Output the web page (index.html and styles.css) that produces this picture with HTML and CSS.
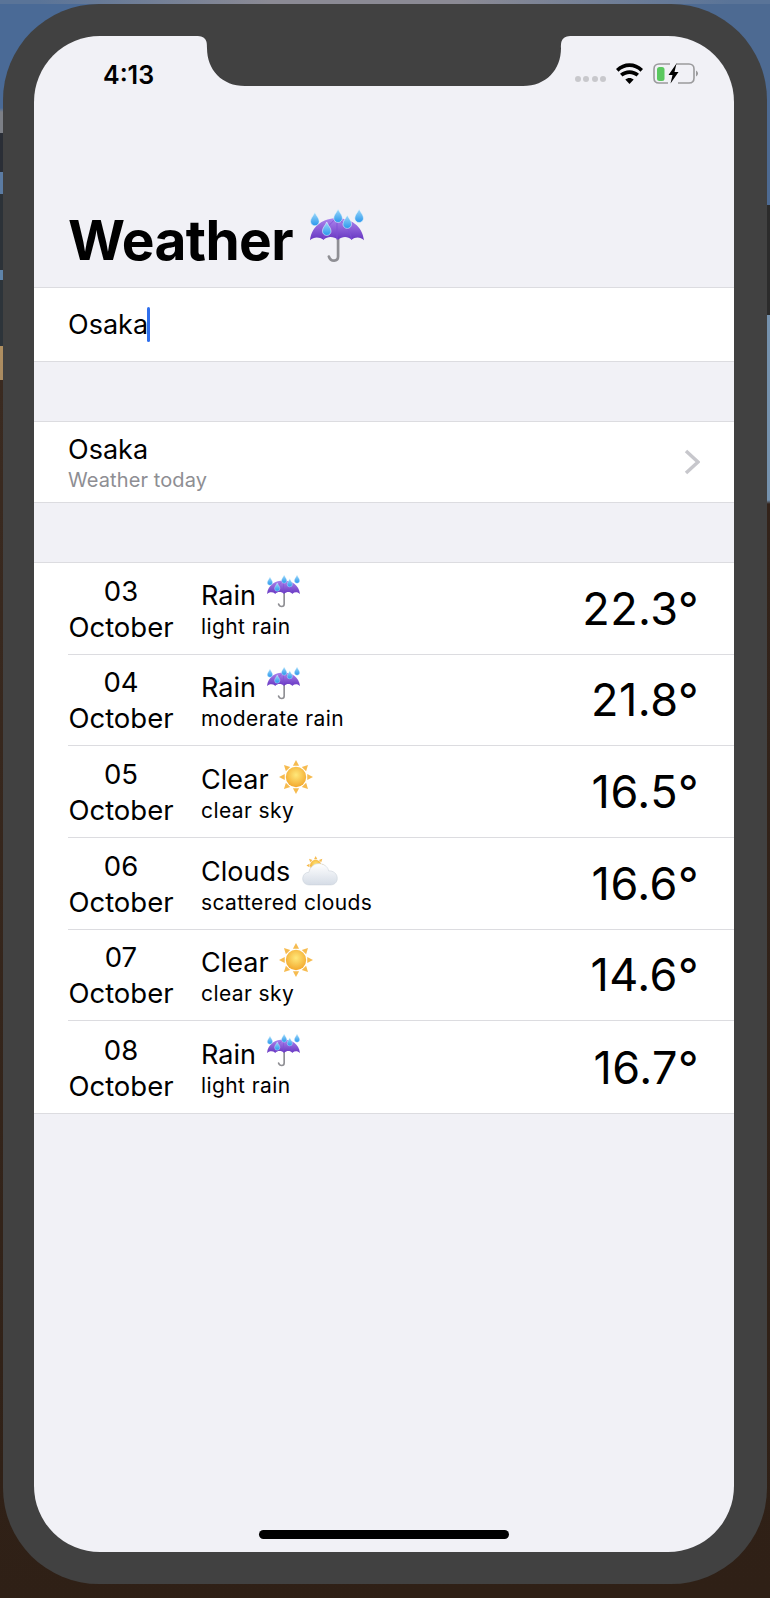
FILE: index.html
```html
<!DOCTYPE html>
<html lang="en">
  <head>
    <meta charset="UTF-8" />
    <title>Weather</title>
    <link rel="stylesheet" href="styles.css">
  </head>
  <body>
    <svg class="defs" aria-hidden="true">
      <defs>
        <linearGradient id="canopy" x1="0" y1="0" x2="0" y2="1">
          <stop offset="0" stop-color="#ad85ee" />
          <stop offset="1" stop-color="#6534c0" />
        </linearGradient>
        <linearGradient id="water" x1="0" y1="0" x2="0" y2="1">
          <stop offset="0" stop-color="#9fdafa" />
          <stop offset="1" stop-color="#2a97ec" />
        </linearGradient>
        <radialGradient id="sunball" cx="0.5" cy="0.4" r="0.6">
          <stop offset="0" stop-color="#ffe87a" />
          <stop offset="1" stop-color="#f3a92e" />
        </radialGradient>
        <linearGradient id="puff" x1="0" y1="0" x2="0" y2="1">
          <stop offset="0" stop-color="#ffffff" />
          <stop offset="1" stop-color="#d5dce6" />
        </linearGradient>
        <path id="drop" d="M0 -14C3 -7 8 -3 8 3A8 8 0 0 1 -8 3C-8 -3 -3 -7 0 -14Z" fill="url(#water)" stroke="#eef8fe" stroke-width="1" />
        <path id="ray" d="M50 0L41 17H59Z" fill="#f6bb4f" />
        <symbol id="rain" viewBox="0 0 100 100">
          <path d="M52 55V88C52 98 38 98 35 88" fill="none" stroke="#8f8f94" stroke-width="5" stroke-linecap="round" />
          <path d="M0 58C3 30 26 17 50 17C74 17 97 30 100 58C93 51 84 51 77 57C70 50 60 50 52 57C44 50 32 50 25 57C17 51 7 51 0 58Z" fill="url(#canopy)" />
          <path d="M50 17C36 26 27 40 25 57M50 17C64 26 75 40 77 57M50 17V57" fill="none" stroke="#7f50d6" stroke-width="1.500" />
          <use href="#drop" x="9" y="20" />
          <use href="#drop" x="31" y="38" />
          <use href="#drop" x="52" y="14" />
          <use href="#drop" x="69" y="25" />
          <use href="#drop" x="91" y="14" />
        </symbol>
        <symbol id="sun" viewBox="0 0 100 100">
          <use href="#ray" />
          <use href="#ray" transform="rotate(45 50 50)" />
          <use href="#ray" transform="rotate(90 50 50)" />
          <use href="#ray" transform="rotate(135 50 50)" />
          <use href="#ray" transform="rotate(180 50 50)" />
          <use href="#ray" transform="rotate(225 50 50)" />
          <use href="#ray" transform="rotate(270 50 50)" />
          <use href="#ray" transform="rotate(315 50 50)" />
          <circle cx="50" cy="50" r="30" fill="url(#sunball)" />
        </symbol>
        <symbol id="clouds" viewBox="0 0 100 100">
          <g transform="translate(12 17) scale(0.52)">
            <use href="#sun" width="100" height="100" />
          </g>
          <path d="M20 97C8 97 1 88 2 78C3 68 10 62 19 62C22 46 36 36 51 38C65 40 73 50 74 58C87 57 98 66 98 79C98 90 89 97 80 97Z" fill="url(#puff)" stroke="#c9d0da" stroke-width="1.500" />
        </symbol>
      </defs>
    </svg>

    <div class="phone">
      <main class="screen">
        <svg class="notch" viewBox="0 0 376 50" aria-hidden="true">
          <path d="M0 0H376C365 0 365 6 365 12C365 34 350 50 327 50H49C26 50 11 34 11 12C11 6 11 0 0 0Z" />
        </svg>

        <div class="status-bar">
          <span class="clock">4:13</span>
          <div class="status-icons">
            <div class="signal"><i></i><i></i><i></i><i></i></div>
            <svg class="wifi" viewBox="0 0 27 21">
              <path d="M13.500 21L9.300 16.500C11.600 14.400 15.400 14.400 17.700 16.500Z" />
              <path d="M6.500 13.500L4 10.800C9.300 6 17.700 6 23 10.800L20.500 13.500C16.500 10 10.500 10 6.500 13.500Z" />
              <path d="M2.500 8.700L0 6C7.500 -1.800 19.500 -1.800 27 6L24.500 8.700C18.300 2.500 8.700 2.500 2.500 8.700Z" />
            </svg>
            <svg class="battery" viewBox="0 0 45 21">
              <path d="M17 1H6C3 1 1 3 1 6V15C1 18 3 20 6 20H15M25 20H36C39 20 41 18 41 15V6C41 3 39 1 36 1H23" fill="none" stroke="#9a9a9c" stroke-width="1.600" />
              <path d="M43 7.500C44.500 8.500 45 9.500 45 10.500C45 11.500 44.500 12.500 43 13.500Z" fill="#9a9a9c" />
              <rect x="4" y="4" width="7.500" height="14" rx="2.500" fill="#5ac85f" />
              <path d="M23.500 0.500L15.500 12H19.500L17.500 20.500L25.500 9H21.500Z" fill="#000" />
            </svg>
          </div>
        </div>

        <header class="page-head">
          <h1 class="page-title">Weather <svg class="emoji emoji-title"><use href="#rain" /></svg></h1>
        </header>

        <section class="group search-row">
          <span class="search-text">Osaka</span><span class="caret"></span>
        </section>

        <section class="group city-row">
          <div class="city-text">
            <div class="city-name">Osaka</div>
            <div class="city-sub">Weather today</div>
          </div>
          <svg class="chevron" viewBox="0 0 16 26"><path d="M2 2L14 13L2 24" /></svg>
        </section>

        <section class="group forecast">
          <div class="day">
            <div class="date">03<br />October</div>
            <div class="cond">
              <div class="cond-main">Rain <svg class="emoji"><use href="#rain" /></svg></div>
              <div class="cond-sub">light rain</div>
            </div>
            <div class="temp">22.3°</div>
          </div>
          <div class="day">
            <div class="date">04<br />October</div>
            <div class="cond">
              <div class="cond-main">Rain <svg class="emoji"><use href="#rain" /></svg></div>
              <div class="cond-sub">moderate rain</div>
            </div>
            <div class="temp">21.8°</div>
          </div>
          <div class="day">
            <div class="date">05<br />October</div>
            <div class="cond">
              <div class="cond-main">Clear <svg class="emoji emoji-sun"><use href="#sun" /></svg></div>
              <div class="cond-sub">clear sky</div>
            </div>
            <div class="temp">16.5°</div>
          </div>
          <div class="day">
            <div class="date">06<br />October</div>
            <div class="cond">
              <div class="cond-main">Clouds <svg class="emoji emoji-cloud"><use href="#clouds" /></svg></div>
              <div class="cond-sub">scattered clouds</div>
            </div>
            <div class="temp">16.6°</div>
          </div>
          <div class="day">
            <div class="date">07<br />October</div>
            <div class="cond">
              <div class="cond-main">Clear <svg class="emoji emoji-sun"><use href="#sun" /></svg></div>
              <div class="cond-sub">clear sky</div>
            </div>
            <div class="temp">14.6°</div>
          </div>
          <div class="day">
            <div class="date">08<br />October</div>
            <div class="cond">
              <div class="cond-main">Rain <svg class="emoji"><use href="#rain" /></svg></div>
              <div class="cond-sub">light rain</div>
            </div>
            <div class="temp">16.7°</div>
          </div>
        </section>

        <div class="home-bar"></div>
      </main>
    </div>
  </body>
</html>
```
FILE: styles.css
```css
html,
body {
  height: 100%;
}
body {
  margin: 0;
  padding: 4px 0 0 3px;
  box-sizing: border-box;
  overflow: hidden;
  font-family: "Inter", "Liberation Sans", sans-serif;
  color: #000;
  background:
    linear-gradient(90deg, #5a7498 5%, #8b8a94 35%, #8b8a94 60%, #5a7498 95%) left top / 100% 4px no-repeat,
    linear-gradient(
        #4a6a96 0,
        #4a6a96 108px,
        #7c7f86 112px,
        #7c7f86 133px,
        #2a2e36 133px,
        #2a2e36 172px,
        #5b7ba2 172px,
        #5b7ba2 194px,
        #2c3238 194px,
        #2c3238 270px,
        #5f84aa 270px,
        #5f84aa 280px,
        #2d343a 280px,
        #2d343a 346px,
        #b08f60 346px,
        #a98a60 380px,
        #3a2a20 380px,
        #2f2016 100%
      )
      left top / 50% 100% no-repeat,
    linear-gradient(
        #4d6a92 0,
        #4d6a92 205px,
        #2b2b2b 205px,
        #2b2b2b 315px,
        #7592ae 315px,
        #7592ae 500px,
        #33231a 504px,
        #2f2016 100%
      )
      right top / 50% 100% no-repeat;
}
.defs {
  display: block;
  width: 0;
  height: 0;
}
.phone {
  width: 764px;
  height: 1580px;
  box-sizing: border-box;
  padding: 32px 33px 32px 31px;
  background: #414141;
  border-radius: 96px;
}
.screen {
  position: relative;
  height: 100%;
  display: flex;
  flex-direction: column;
  overflow: hidden;
  background: #f1f1f6;
  border-radius: 66px;
}
.notch {
  position: absolute;
  top: 0;
  left: 162px;
  width: 376px;
  height: 50px;
  fill: #414141;
}

/* status bar */
.status-bar {
  display: flex;
  align-items: center;
  justify-content: space-between;
  height: 50px;
  padding: 28px 36px 0 69px;
  box-sizing: border-box;
}
.clock {
  font-size: 25px;
  font-weight: 600;
}
.status-icons {
  display: flex;
  align-items: center;
  gap: 10px;
  margin-top: -3px;
}
.signal {
  display: flex;
  gap: 2.5px;
  margin-top: 11px;
}
.signal i {
  width: 6px;
  height: 6px;
  border-radius: 50%;
  background: #c8c8cc;
}
.wifi {
  width: 27px;
  height: 21px;
}
.battery {
  width: 45px;
  height: 21px;
}

/* header */
.page-head {
  height: 201px;
  box-sizing: border-box;
  padding: 122px 0 0 34px;
}
.page-title {
  display: flex;
  align-items: center;
  gap: 17px;
  margin: 0;
  font-size: 55px;
  line-height: 64px;
  font-weight: 700;
  letter-spacing: -0.6px;
}
.emoji {
  width: 33px;
  height: 33px;
  margin-left: 3px;
  vertical-align: -3px;
}
.emoji-sun {
  width: 34px;
  height: 34px;
  transform: translateY(2px);
}
.emoji-cloud {
  width: 36px;
  height: 36px;
  margin-left: 4px;
  vertical-align: -5px;
}
.emoji-title {
  width: 54px;
  height: 56px;
  margin: -8px 0 0;
}

/* groups */
.group {
  background: #fff;
  border-top: 1px solid #dcdce0;
  border-bottom: 1px solid #dcdce0;
}
.search-row {
  display: flex;
  align-items: center;
  height: 75px;
  box-sizing: border-box;
  padding-left: 34px;
  font-size: 27px;
}
.caret {
  width: 3.5px;
  height: 35px;
  margin-left: -1.5px;
  border-radius: 2px;
  background: #2f6fed;
}
.city-row {
  display: flex;
  align-items: center;
  justify-content: space-between;
  height: 82px;
  box-sizing: border-box;
  margin-top: 59px;
  padding: 0 34px;
}
.city-name {
  font-size: 27px;
  line-height: 35px;
}
.city-sub {
  padding-top: 1px;
  font-size: 20px;
  line-height: 25px;
  letter-spacing: 0.1px;
  color: #8e8e93;
}
.chevron {
  width: 16px;
  height: 26px;
  fill: none;
  stroke: #c7c7cc;
  stroke-width: 3.5;
}

/* forecast list */
.forecast {
  display: grid;
  grid-auto-rows: 1fr;
  height: 552px;
  box-sizing: border-box;
  margin-top: 59px;
}
.day {
  display: flex;
  align-items: center;
  margin-left: 34px;
  padding-right: 35px;
  border-bottom: 1px solid #dcdce0;
}
.day:last-child {
  border-bottom: 0;
}
.date {
  width: 106px;
  padding-top: 1px;
  font-size: 27.5px;
  line-height: 36px;
  text-align: center;
}
.cond {
  margin-left: 27px;
}
.cond-main {
  font-size: 27px;
  line-height: 34px;
}
.cond-sub {
  font-size: 21px;
  line-height: 28px;
  letter-spacing: 0.4px;
}
.temp {
  margin-left: auto;
  font-size: 45px;
  letter-spacing: 0.5px;
}
.home-bar {
  width: 250px;
  height: 9px;
  margin: auto auto 13px;
  border-radius: 5px;
  background: #000;
}
```
